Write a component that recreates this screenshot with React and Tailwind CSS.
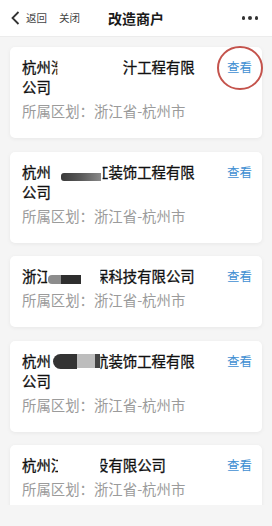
import React from "react";

const font = { fontFamily: '"Noto Sans CJK SC", "Noto Sans", sans-serif' };

// right part of a partly erased character
function Part({ ch, cut = "50%" }) {
    return (
        <span className="inline-block" style={{ clipPath: `inset(0 0 0 ${cut})` }}>
            {ch}
        </span>
    );
}

function Hidden({ text, children }) {
    return (
        <span className="relative">
            <span className="text-transparent [-webkit-text-stroke:0px_transparent]">{text}</span>
            {children}
        </span>
    );
}

const shops = [
    {
        id: 1,
        circled: true,
        title: (
            <>
                杭州
                <span className="inline-block" style={{ clipPath: "inset(0 55% 0 0)" }}>浩</span>
                <Hidden text="某某某某" />
                汁工程有限公司
            </>
        ),
    },
    {
        id: 2,
        title: (
            <>
                杭州
                <Hidden text="某某某">
                    <span className="absolute left-[10px] top-[12px] h-[8px] w-[40px] rounded-l-[3px] bg-gradient-to-r from-[#3a3a3a] via-[#5a5a5a] to-[#8a8a8a]" />
                </Hidden>
                <Part ch="红" cut="60%" />
                装饰工程有限公司
            </>
        ),
    },
    {
        id: 3,
        title: (
            <>
                浙
                <span className="inline-block" style={{ clipPath: "inset(0 25% 0 0)" }}>江</span>
                <Hidden text="某某某">
                    <span className="absolute -left-[3px] top-[10px] h-[9px] w-[13px] rounded-l-[4px] bg-[#8c8c8c]" />
                    <span className="absolute left-[10px] top-[10px] h-[9px] w-[20px] bg-[#2e2e2e]" />
                </Hidden>
                <Part ch="保" cut="45%" />
                科技有限公司
            </>
        ),
    },
    {
        id: 4,
        title: (
            <>
                杭州
                <Hidden text="某某某">
                    <span className="absolute left-[2px] top-[4px] h-[15px] w-[24px] rounded-l-[8px] bg-[#333]" />
                    <span className="absolute left-[26px] top-[4px] h-[14px] w-[18px] bg-[#bdbdbd]" />
                    <span className="absolute left-[44px] top-[4px] h-[14px] w-[5px] bg-[#444]" />
                </Hidden>
                <Part ch="航" cut="45%" />
                装饰工程有限公司
            </>
        ),
    },
    {
        id: 5,
        title: (
            <>
                杭州
                <span className="inline-block" style={{ clipPath: "inset(0 50% 0 0)" }}>江</span>
                <Hidden text="某某" />
                <Part ch="设" cut="45%" />
                有限公司
            </>
        ),
    },
];

function ShopCard({ shop }) {
    return (
        <div className="relative flex shrink-0 rounded-[5px] bg-white pb-[17px] pl-[12px] pr-[10px] pt-[10px] shadow-[0_1px_4px_rgba(0,0,0,0.06)]">
            <div className="w-[180px]">
                <div className="text-[14.4px] font-normal leading-[20px] text-[#111] [-webkit-text-stroke:0.3px_#111]">{shop.title}</div>
                <div className="mt-[4px] whitespace-nowrap text-[14.4px] leading-[20px] text-[#9b9b9b]">
                    所属区划：浙江省-杭州市
                </div>
            </div>
            <div className="ml-auto text-[12.5px] leading-[20px] text-[#3f8fd2]">查看</div>
            {shop.circled && (
                <svg className="absolute left-[207px] top-[-1px] overflow-visible" width="46" height="44">
                    <ellipse cx="23" cy="22" rx="22" ry="21" fill="none" stroke="#c4534c" strokeWidth="2" />
                </svg>
            )}
        </div>
    );
}

export default function App() {
    return (
        <div className="flex h-[526px] w-[272px] flex-col overflow-hidden bg-[#f5f5f5]" style={font}>
            <div className="relative flex h-[37px] shrink-0 items-center border-b border-[#ececec] bg-white">
                <svg className="ml-[11px]" width="9" height="14" viewBox="0 0 9 14">
                    <polyline points="7.5,1 1.5,7 7.5,13" fill="none" stroke="#333" strokeWidth="1.8" strokeLinejoin="miter" />
                </svg>
                <span className="ml-[6px] text-[10.5px] text-[#444]">返回</span>
                <span className="ml-[12px] text-[10.5px] text-[#444]">关闭</span>
                <span className="absolute left-1/2 -translate-x-1/2 text-[14px] font-bold text-[#1a1a1a]">改造商户</span>
                <div className="ml-auto mr-[14px] flex gap-[3px]">
                    <span className="h-[3.5px] w-[3.5px] rounded-full bg-[#333]" />
                    <span className="h-[3.5px] w-[3.5px] rounded-full bg-[#333]" />
                    <span className="h-[3.5px] w-[3.5px] rounded-full bg-[#333]" />
                </div>
            </div>
            <div className="flex h-[468px] shrink-0 flex-col gap-[13.5px] overflow-hidden px-[10px] pt-[10px]">
                {shops.map((s) => (
                    <ShopCard key={s.id} shop={s} />
                ))}
            </div>
        </div>
    );
}
